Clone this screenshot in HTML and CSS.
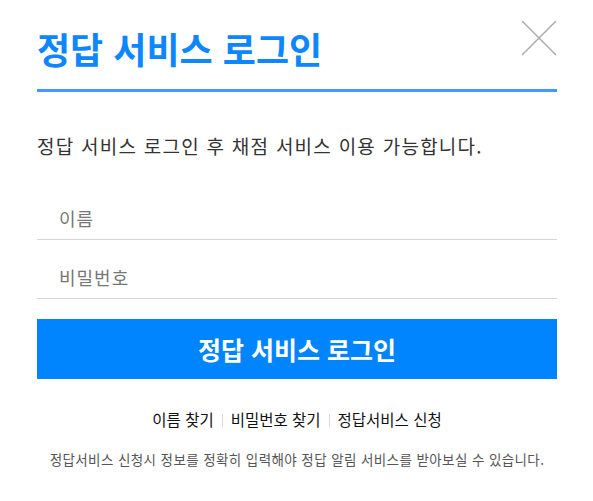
FILE: index.html
```html
<!DOCTYPE html>
<html lang="ko">
<head>
    <meta charset="UTF-8">
    <meta name="viewport" content="width=device-width, initial-scale=1.0">
    <title>정답 서비스 로그인</title>
    <link rel="stylesheet" href="styles.css">
</head>
<body>

    <div class="login-popup">
        <div class="popup-head">
            <h1>정답 서비스 로그인</h1>
            <button class="close-btn" type="button" aria-label="닫기">
                <svg width="36" height="36" viewBox="0 0 36 36">
                    <line x1="1" y1="1" x2="35" y2="35" />
                    <line x1="35" y1="1" x2="1" y2="35" />
                </svg>
            </button>
        </div>

        <p class="desc">정답 서비스 로그인 후 채점 서비스 이용 가능합니다.</p>

        <form class="login-form" onsubmit="return false;">
            <input type="text" class="field" placeholder="이름">
            <input type="password" class="field" placeholder="비밀번호">
            <button class="btn-login" type="submit">정답 서비스 로그인</button>
        </form>

        <div class="links">
            <a href="#">이름 찾기</a>
            <span class="bar"></span>
            <a href="#">비밀번호 찾기</a>
            <span class="bar"></span>
            <a href="#">정답서비스 신청</a>
        </div>

        <p class="notice">정답서비스 신청시 정보를 정확히 입력해야 정답 알림 서비스를 받아보실 수 있습니다.</p>
    </div>

</body>
</html>
```

FILE: styles.css
```css
/* Basic Reset */
* {
    margin: 0;
    padding: 0;
    box-sizing: border-box;
}

body {
    font-family: "Noto Sans CJK KR", "Noto Sans", sans-serif;
    color: #333;
    background: #fff;
}

.login-popup {
    padding: 20px 36px 0 37px;
}

/* Header */
.popup-head {
    display: flex;
    justify-content: space-between;
    align-items: flex-start;
    height: 72px;
    border-bottom: 3px solid #4499ff;
}

.popup-head h1 {
    margin-top: 7px;
    font-size: 36px;
    line-height: 1.2;
    font-weight: 700;
    color: #0d86ff;
}

.close-btn {
    width: 36px;
    height: 36px;
    border: 0;
    background: none;
    cursor: pointer;
}

    .close-btn svg {
        display: block;
    }

    .close-btn line {
        stroke: #aaa;
        stroke-width: 1.5;
    }

.desc {
    margin-top: 42px;
    font-size: 19px;
    line-height: 1.3;
    letter-spacing: 1.25px;
    color: #333;
}

/* Form */
.login-form {
    margin-top: 22px;
}

.field {
    display: block;
    width: 100%;
    height: 59px;
    padding: 16px 22px 0;
    border: 0;
    border-bottom: 1px solid #d5d5d5;
    font-family: inherit;
    font-size: 18px;
    letter-spacing: 1px;
    color: #333;
    outline: none;
}

    .field::placeholder {
        color: #777;
    }

.btn-login {
    display: block;
    width: 100%;
    height: 60px;
    margin-top: 20px;
    border: 0;
    background: #0085ff;
    color: #fff;
    font-family: inherit;
    font-size: 25px;
    font-weight: 700;
    cursor: pointer;
}

/* Links */
.links {
    margin-top: 29px;
    display: flex;
    justify-content: center;
    align-items: center;
    gap: 8px;
    font-size: 15.5px;
    line-height: 22px;
}

    .links a {
        color: #111;
        text-decoration: none;
    }

    .links .bar {
        width: 1px;
        height: 13px;
        margin-top: 3px;
        background: #d8d8e4;
    }

.notice {
    margin-top: 20px;
    text-align: center;
    font-size: 13.5px;
    line-height: 18px;
    letter-spacing: 0.4px;
    color: #555;
}
```
